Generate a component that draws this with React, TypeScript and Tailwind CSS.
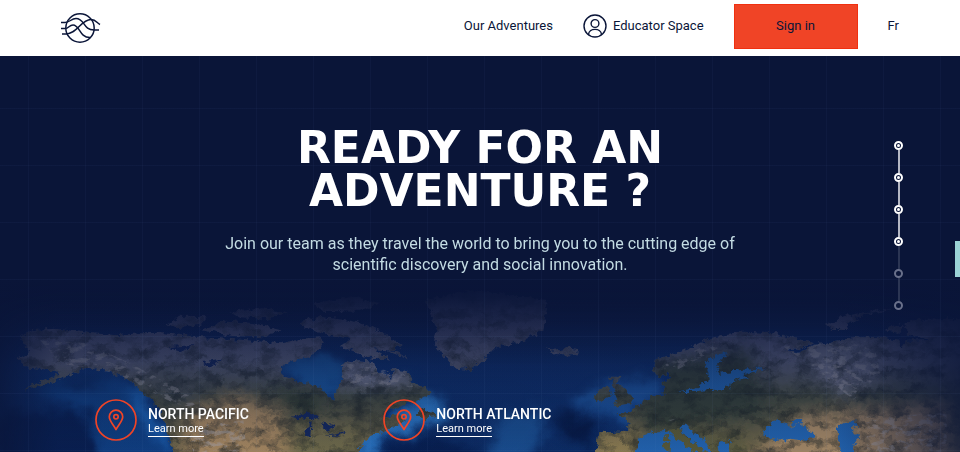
import React from "react";

const blackSea =
  "M2290 465 L2300 440 L2330 420 L2352 430 L2378 440 L2405 430 L2425 448 L2445 470 L2420 482 L2370 476 L2330 482Z";
const land = [
  // North America
  "M60 170 L100 150 L170 146 L260 158 L350 166 L420 160 L480 158 L540 165 L610 172 L680 176 L760 182 L840 190 L900 178 L960 168 L975 190 L950 205 L930 232 L880 240 L840 262 L845 288 L900 305 L960 320 L975 345 L1005 360 L1010 330 L1030 300 L1022 252 L1060 240 L1120 245 L1130 275 L1165 282 L1172 305 L1180 265 L1215 270 L1240 305 L1290 335 L1275 352 L1220 372 L1165 392 L1150 410 L1200 405 L1215 420 L1180 440 L1105 470 L1090 495 L1065 516 L1050 580 L530 580 L520 516 L505 470 L492 420 L475 380 L440 350 L400 310 L370 290 L310 272 L260 262 L200 292 L140 312 L70 330 L130 300 L175 280 L150 270 L80 262 L50 235 L90 215Z",
  // Arctic islands
  "M495 135 L540 110 L620 112 L600 135 L530 145Z M600 150 L680 122 L760 130 L840 150 L800 172 L700 168Z M690 95 L790 85 L860 100 L800 116 L720 112Z M890 125 L960 110 L1060 124 L1140 150 L1205 195 L1180 212 L1120 208 L1170 240 L1090 228 L1020 200 L1050 180 L960 160Z M940 70 L1060 50 L1140 70 L1080 95 L960 92Z M1220 235 L1200 218 L1160 212Z",
  // Greenland and Iceland
  "M1280 60 L1420 30 L1640 60 L1630 152 L1560 185 L1480 205 L1442 248 L1412 270 L1360 260 L1330 230 L1302 190 L1310 150Z M1635 205 L1665 212 L1700 202 L1740 208 L1720 226 L1670 226Z",
  // British Isles and Newfoundland
  "M1830 290 L1865 290 L1850 308 L1878 330 L1900 358 L1880 375 L1838 382 L1852 360 L1840 345 L1846 325Z M1790 330 L1830 322 L1832 350 L1795 366 L1782 350Z M1250 405 L1270 385 L1305 398 L1310 412 L1270 415Z",
  // Eurasia
  "M1795 460 L1850 455 L1885 456 L1885 425 L1850 400 L1890 395 L1925 370 L1960 346 L1992 342 L1988 310 L2010 298 L2012 280 L1975 290 L1958 270 L1965 240 L2040 215 L2130 175 L2230 155 L2330 160 L2440 190 L2400 205 L2360 208 L2400 220 L2440 195 L2520 180 L2580 172 L2640 170 L2720 182 L2790 180 L2740 168 L2650 150 L2740 120 L2820 118 L2960 116 L2960 580 L1780 580Z",
  "M2475 135 L2530 108 L2600 96 L2670 84 L2660 92 L2580 108 L2540 135 L2545 150 L2495 150Z",
].join(" ");

const water = [
  "M2030 335 L2080 325 L2130 300 L2115 250 L2145 222 L2180 220 L2148 258 L2158 278 L2225 270 L2300 264 L2230 282 L2250 294 L2208 300 L2170 328 L2100 332Z",
  blackSea,
  "M2372 425 L2402 418 L2398 432 L2375 438Z",
  "M2510 440 L2560 418 L2575 438 L2555 450 L2582 475 L2560 490 L2578 580 L2535 580Z",
  "M1920 470 L1960 455 L2005 452 L2045 478 L2090 516 L2100 580 L1880 580 L1905 516Z",
  "M2040 435 L2062 434 L2080 455 L2112 478 L2135 516 L2135 580 L2095 500 L2055 465Z",
  "M2155 488 L2190 484 L2200 580 L2165 580Z",
].join(" ");

const lakes =
  "M872 412 L920 398 L962 410 L940 418Z M918 440 L935 425 L930 474 L915 470Z M960 430 L1005 435 L985 455Z M975 468 L1045 455 L1030 466Z M500 202 L580 195 L540 214Z M605 250 L670 238 L625 260Z M2705 130 L2722 140 L2720 172 L2705 200 L2694 194 L2706 160Z";

function EarthMap() {
  return (
    <svg
      viewBox="0 0 2880 516"
      className="absolute inset-x-0 bottom-0 w-full"
      aria-hidden="true"
    >
      <defs>
        <linearGradient id="sea" x1="0" y1="0" x2="0" y2="1">
          <stop offset="0" stopColor="#0a1538" />
          <stop offset="0.5" stopColor="#0f3270" />
          <stop offset="1" stopColor="#0d2c63" />
        </linearGradient>
        <linearGradient id="veil" x1="0" y1="0" x2="0" y2="1">
          <stop offset="0" stopColor="#0a1538" />
          <stop offset="0.1" stopColor="#0a1538" stopOpacity="0.95" />
          <stop offset="0.22" stopColor="#0a1538" stopOpacity="0.8" />
          <stop offset="0.38" stopColor="#0a1538" stopOpacity="0.58" />
          <stop offset="0.6" stopColor="#0a1538" stopOpacity="0.32" />
          <stop offset="1" stopColor="#0a1538" stopOpacity="0" />
        </linearGradient>
        <linearGradient id="sides" x1="0" y1="0" x2="1" y2="0">
          <stop offset="0" stopColor="#0a1538" stopOpacity="0.75" />
          <stop offset="0.06" stopColor="#0a1538" stopOpacity="0.05" />
          <stop offset="0.87" stopColor="#0a1538" stopOpacity="0" />
          <stop offset="1" stopColor="#0a1538" stopOpacity="0.75" />
        </linearGradient>
        <linearGradient id="ground" x1="0" y1="0" x2="0" y2="580" gradientUnits="userSpaceOnUse">
          <stop offset="0.2" stopColor="#5f6184" />
          <stop offset="0.42" stopColor="#60657d" />
          <stop offset="0.6" stopColor="#434a40" />
          <stop offset="0.9" stopColor="#6b6248" />
        </linearGradient>
        <filter id="soft" x="-50%" y="-50%" width="200%" height="200%">
          <feGaussianBlur stdDeviation="22" />
        </filter>
        <filter id="shelf" x="-20%" y="-20%" width="140%" height="140%" colorInterpolationFilters="sRGB">
          <feGaussianBlur in="SourceGraphic" stdDeviation="16" result="blurred" />
          <feTurbulence type="fractalNoise" baseFrequency="0.014" numOctaves="4" seed="3" />
          <feDisplacementMap in="blurred" scale="60" xChannelSelector="R" yChannelSelector="G" />
        </filter>
        <filter id="coast" x="0" y="0" width="100%" height="100%" colorInterpolationFilters="sRGB">
          <feTurbulence type="fractalNoise" baseFrequency="0.06" numOctaves="3" seed="4" />
          <feDisplacementMap in="SourceGraphic" scale="24" xChannelSelector="R" yChannelSelector="G" />
        </filter>
        <filter id="relief" x="0" y="0" width="100%" height="100%" colorInterpolationFilters="sRGB">
          <feTurbulence type="fractalNoise" baseFrequency="0.018 0.034" numOctaves="6" seed="9" />
          <feColorMatrix values="0 0 0 0 0.1  0 0 0 0 0.13  0 0 0 0 0.14  2.6 0 0 0 -1.05" />
          <feComposite in2="SourceGraphic" operator="in" />
        </filter>
        <filter id="frost" x="0" y="0" width="100%" height="100%" colorInterpolationFilters="sRGB">
          <feTurbulence type="fractalNoise" baseFrequency="0.035 0.06" numOctaves="5" seed="21" />
          <feColorMatrix values="0 0 0 0 0.66  0 0 0 0 0.65  0 0 0 0 0.68  0 6 0 0 -3.1" />
          <feComposite in2="SourceGraphic" operator="in" />
        </filter>
        <clipPath id="land">
          <path d={land} />
        </clipPath>
      </defs>

      <rect width="2880" height="516" fill="url(#sea)" />
      <g filter="url(#shelf)">
        <path d="M110 330 L260 275 L350 285 L490 400 L520 580 L300 580 L270 400Z" fill="#124488" opacity="0.8" />
        <path d="M380 310 L440 350 L530 516 L490 500 L400 380Z" fill="#1c62b4" />
        <path d="M0 400 L230 390 L300 480 L260 580 L0 580Z" fill="#091f50" />
        <path d="M130 330 L250 285 L340 300 L260 310Z" fill="#0a2152" />
        <path d="M1210 290 L1330 370 L1340 420 L1240 440 L1120 500 L1060 580 L1060 490 L1130 430 L1250 380Z" fill="#2c78c6" />
        <path d="M835 240 L930 225 L1030 250 L1015 360 L880 310Z" fill="#1b59a2" />
        <path d="M1500 410 L1640 380 L1580 580 L1450 580Z" fill="#1d5496" opacity="0.8" />
        <path d="M1660 400 L1790 420 L1800 490 L1700 480Z" fill="#071a45" />
        <path d="M1160 510 L1260 460 L1420 500 L1420 580 L1160 580Z" fill="#081f50" />
        <path d="M1700 370 L1800 310 L1960 290 L1985 345 L1860 430 L1800 400Z" fill="#1c529a" />
      </g>

      <g filter="url(#coast)">
        <path d={land} fill="url(#ground)" />
        <g clipPath="url(#land)">
          <g filter="url(#soft)">
            <path d="M560 400 L700 340 L840 390 L900 580 L540 580Z" fill="#a3855f" />
            <path d="M860 440 L1090 430 L1060 580 L860 580Z" fill="#6d6748" />
            <path d="M440 270 L620 300 L560 370 L470 340Z" fill="#4c5156" />
            <path d="M1020 235 L1200 250 L1240 310 L1020 320Z" fill="#777c94" />
            <path d="M800 330 L960 340 L950 400 L880 390Z" fill="#344031" />
            <path d="M1960 250 L2250 200 L2300 400 L1920 460Z" fill="#353f38" />
            <path d="M2400 400 L2840 370 L2850 580 L2200 580Z" fill="#9c8263" />
            <path d="M2400 190 L2650 170 L2640 290 L2520 350 L2400 240Z" fill="#6d7186" />
            <path d="M1780 460 L1920 455 L1910 580 L1780 580Z" fill="#887850" />
            <path d="M2000 440 L2250 480 L2220 580 L2080 580Z" fill="#59583d" />
          </g>
          <path d={land} fill="#000" filter="url(#relief)" opacity="0.6" />
        </g>
        <path d={water} fill="#2160aa" />
        <path d={lakes} fill="#14285c" />
        <path d="M2000 450 L2038 444 L2050 468 L2120 516 L2130 580 L2086 516 L2030 478Z M1992 466 L2010 465 L2012 484 L1994 482Z M1988 490 L2008 488 L2005 510 L1990 508Z" fill="#555637" />
      </g>
      <path
        d="M120 180 L260 190 L390 250 L600 360 L620 390 L520 370 L350 280 L180 250Z M2350 200 L2620 180 L2640 280 L2560 360 L2440 260Z M560 440 L730 420 L740 516 L580 516Z M2600 410 L2840 400 L2840 516 L2600 516Z M1040 250 L1210 280 L1240 320 L1050 310Z M1980 260 L2130 190 L2240 160 L2020 275Z M1970 425 L2040 415 L1990 430Z"
        fill="#000"
        filter="url(#frost)"
        opacity="0.45"
      />
      <rect width="2880" height="516" fill="url(#veil)" />
      <rect width="2880" height="516" fill="url(#sides)" />
    </svg>
  );
}

function Logo() {
  return (
    <svg width="40" height="32" viewBox="0 0 40 32" fill="none" stroke="#0a1538" strokeWidth="1.5" aria-hidden="true">
      <circle cx="19" cy="16" r="14.2" />
      <path d="M0 10.500 H4 C9 10.500 10 6.500 15 6.500 C24 6.500 22 18 33 18 H38" />
      <path d="M0 16.500 H4 C8 16.500 8 13 12 13 C19 13 18 25.500 29 25.500" />
      <path d="M1 22 H5 C16 22 20 7.500 30 7.500 C35 7.500 36 11 39 12.500" />
    </svg>
  );
}

function UserIcon() {
  return (
    <svg width="24" height="24" viewBox="0 0 24 24" fill="none" stroke="#0a1538" strokeWidth="1.4" aria-hidden="true">
      <circle cx="12" cy="12" r="11" />
      <circle cx="12" cy="9.500" r="3.900" />
      <path d="M5.500 20.500 C6 13.600 18 13.600 18.500 20.500" />
    </svg>
  );
}

function Pin() {
  return (
    <svg width="42" height="42" viewBox="0 0 42 42" fill="none" stroke="#f04426" strokeWidth="1.700" aria-hidden="true">
      <circle cx="21" cy="21" r="20" />
      <path d="M21 30.500 C18 25 14.300 22 14.300 17.800 A6.700 6.700 0 0 1 27.700 17.800 C27.700 22 24 25 21 30.500Z" strokeLinejoin="round" />
      <circle cx="21" cy="17.800" r="2.200" />
    </svg>
  );
}

const stops = [true, true, true, true, false, false];
const regions = ["NORTH PACIFIC", "NORTH ATLANTIC"];

export default function App() {
  return (
    <div className="flex min-h-screen flex-col bg-[#0a1538] font-['Roboto',sans-serif] text-[#0a1538]">
      <header className="flex h-14 items-center justify-between bg-white pr-[61px] pb-1 pl-[61px]">
        <a href="#home" aria-label="Home" className="pt-1">
          <Logo />
        </a>
        <nav className="flex items-center gap-[30px] text-[13px]">
          <a href="#adventures">Our Adventures</a>
          <a href="#educators" className="flex items-center gap-[6px]">
            <UserIcon />
            Educator Space
          </a>
          <button type="button" className="h-[45px] w-[124px] border border-[#f03010] bg-[#f04426]">
            Sign in
          </button>
          <a href="#fr">Fr</a>
        </nav>
      </header>

      <main className="relative flex grow flex-col overflow-hidden">
        <EarthMap />
        <div className="absolute inset-0 bg-[linear-gradient(to_right,rgba(110,140,200,0.05)_1px,transparent_1px),linear-gradient(to_bottom,rgba(110,140,200,0.05)_1px,transparent_1px)] bg-[size:57px_57px] bg-[position:28px_52px]" />

        <div className="relative flex flex-col items-center px-6 pt-[70px] text-center">
          <h1 className="font-['DejaVu_Sans',sans-serif] text-[44px] leading-[43px] font-bold text-white">
            READY FOR AN
            <br />
            ADVENTURE ?
          </h1>
          <p className="mt-[21px] max-w-[540px] text-[16px] leading-[21px] text-[#c3dbe3]">
            Join our team as they travel the world to bring you to the cutting edge of scientific
            discovery and social innovation.
          </p>
        </div>

        <ul className="relative mt-auto grid grid-cols-3 pb-[11px] pl-[95px] text-white">
          {regions.map((name) => (
            <li key={name} className="flex items-center gap-[11px]">
              <Pin />
              <div className="pt-[2px]">
                <h2 className="text-[14px] leading-4 font-medium">{name}</h2>
                <a href="#learn" className="block w-fit border-b border-white text-[11px] leading-[14px]">
                  Learn more
                </a>
              </div>
            </li>
          ))}
        </ul>

        <ol className="absolute top-[85px] right-[57px] flex flex-col items-center">
          {stops.map((on, i) => (
            <li key={i} className="flex flex-col items-center">
              {i > 0 && <span className={on ? "h-[23px] w-[2px] bg-[#b4b7c3]" : "h-[23px] w-[2px] bg-[#2b3553]"} />}
              <button
                type="button"
                aria-label={`Section ${i + 1}`}
                className={
                  on
                    ? "flex size-[9px] items-center justify-center rounded-full border-2 border-white"
                    : "size-[9px] rounded-full border-2 border-[#69708a]"
                }
              >
                {on && <span className="size-[3px] rounded-full bg-white" />}
              </button>
            </li>
          ))}
        </ol>
        <button type="button" aria-label="Feedback" className="absolute top-[185px] right-0 h-9 w-[5px] bg-[#9bd3d6]" />
      </main>
    </div>
  );
}
